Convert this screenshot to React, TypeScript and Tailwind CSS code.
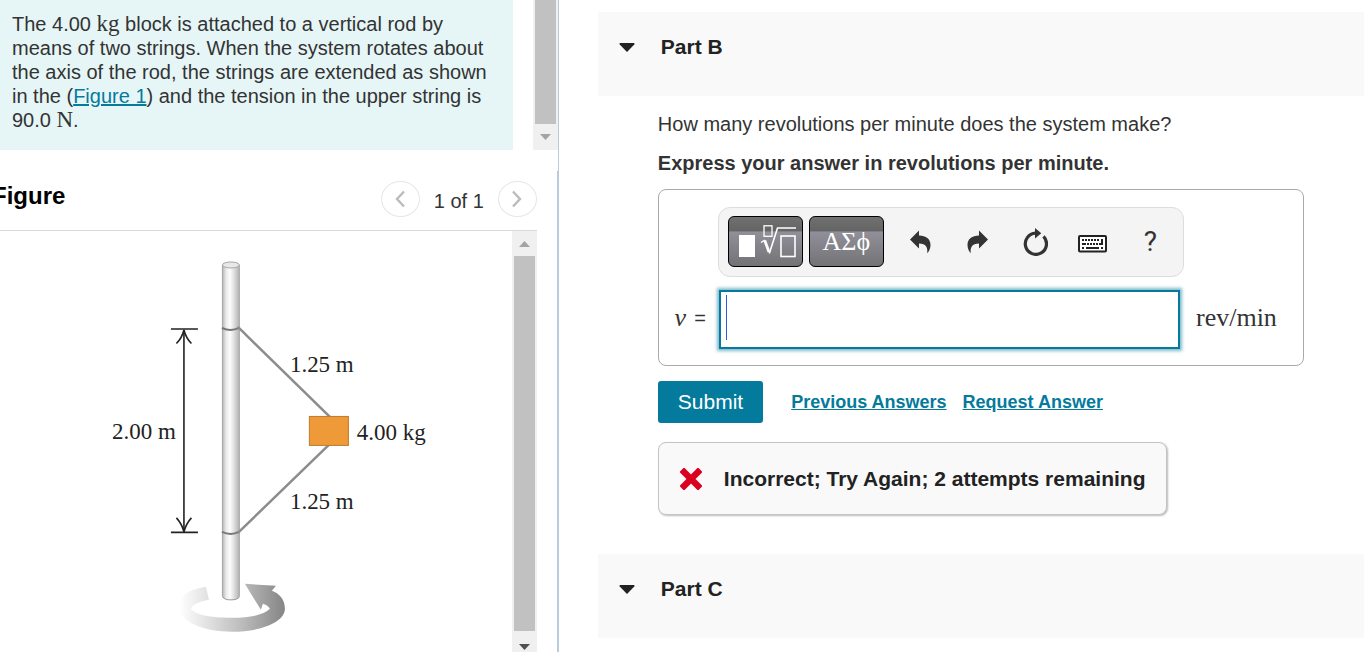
import React from "react"

function ScrollArrow({ up, dark }: { up?: boolean; dark?: boolean }) {
  return (
    <svg width="11" height="6" viewBox="0 0 11 6" className={dark ? "text-[#505050]" : "text-[#a3a3a3]"} aria-hidden="true">
      <path d={up ? "M0 6 L5.5 0 L11 6 Z" : "M0 0 L5.5 6 L11 0 Z"} fill="currentColor" />
    </svg>
  )
}

function UndoIcon({ flip }: { flip?: boolean }) {
  return (
    <svg width="21" height="24" viewBox="0 0 21 24" aria-hidden="true">
      <path
        transform={flip ? "matrix(-1 0 0 1 21 0)" : undefined}
        d="M0 9.5 L9 0.5 V5.5 C16 5.5 20.5 9 20.5 15 C20.5 18.5 19 21.5 17.2 23.3 C18 17.5 16 13.5 9 13.5 V18.5 Z"
        fill="#333"
      />
    </svg>
  )
}

function ResetIcon() {
  return (
    <svg width="25" height="28" viewBox="0 0 25 28" aria-hidden="true">
      <path d="M20.5 8.4 A10.6 10.6 0 1 1 12.5 5.2" fill="none" stroke="#333" strokeWidth="3.2" />
      <path d="M12 0 L18.300 5.200 L12 10.500 Z" fill="#333" />
    </svg>
  )
}

function KeyboardIcon() {
  const top = [5, 8, 11, 14, 17, 20]
  const mid = [9, 12, 15, 18]
  return (
    <svg width="29" height="18" viewBox="0 0 29 18" fill="#222" aria-hidden="true">
      <rect x="1" y="1" width="27" height="15.5" rx="1" fill="#fff" stroke="#222" strokeWidth="2" />
      {top.map((x) => (
        <rect key={x} x={x - 1} y="4" width="2" height="2" />
      ))}
      {mid.map((x) => (
        <rect key={x} x={x} y="8" width="2" height="2" />
      ))}
      <path d="M23 4 h2 v6 h-4 v-2 h2 Z" />
      <rect x="4" y="8" width="4" height="2" />
      <rect x="4" y="12" width="2" height="2" />
      <rect x="8" y="12" width="13" height="2" />
      <rect x="23" y="12" width="2" height="2" />
    </svg>
  )
}

function TemplateIcon() {
  return (
    <svg width="61" height="34" viewBox="-4 0 61 34" fill="none" stroke="#fff" aria-hidden="true">
      <rect x="0" y="10" width="16" height="22" fill="#fff" stroke="none" />
      <rect x="25" y="0.8" width="8" height="10.5" strokeWidth="1.3" />
      <path d="M22 17.5 L26 15" strokeWidth="1.3" />
      <path d="M25.800 15.500 L30 27" strokeWidth="2.8" />
      <path d="M30.300 28.500 L38.500 3 H57" strokeWidth="1.6" />
      <rect x="42" y="11" width="14" height="20.500" strokeWidth="1.6" />
    </svg>
  )
}

function RodFigure() {
  return (
    <svg viewBox="0 0 512 421" className="w-full max-w-[512px]" role="img" aria-label="Block held to a vertical rod by two strings">
      <defs>
        <linearGradient id="rod" x1="0" x2="1" y1="0" y2="0">
          <stop offset="0" stopColor="#9c9c9c" />
          <stop offset="0.1" stopColor="#c9c9c9" />
          <stop offset="0.25" stopColor="#ececec" />
          <stop offset="0.45" stopColor="#fdfdfd" />
          <stop offset="0.65" stopColor="#e2e2e2" />
          <stop offset="0.9" stopColor="#bcbcbc" />
          <stop offset="1" stopColor="#a2a2a2" />
        </linearGradient>
        <linearGradient id="spin" x1="0" x2="1" y1="0" y2="0">
          <stop offset="0" stopColor="#fff" />
          <stop offset="0.3" stopColor="#dedede" />
          <stop offset="0.6" stopColor="#bbb" />
          <stop offset="1" stopColor="#858585" />
        </linearGradient>
      </defs>

      <path
        d="M206 356 C188 359 179 365 179 376 C179 391 204 401 232 401 C262 401 285 391 285 378 C285 369 280 363 272 360 L276 355 L245 353 L261 379 L263 373 C267 374 269 376 270 378 C264 384 250 387 232 387 C210 387 195 384 191 378 C193 373 199 371 209 369 Z"
        fill="url(#spin)"
      />

      <path d="M222 34 V365 Q222 369 231 369 Q240 369 240 365 V34 Z" fill="url(#rod)" />
      <path d="M223 366 Q224 369 231 369 Q238 369 239 366" fill="none" stroke="#999" />
      <ellipse cx="231" cy="34" rx="8.500" ry="3" fill="#e8e8e8" stroke="#a5a5a5" />
      <path d="M222 97 Q231 101 239 97" fill="none" stroke="#777" strokeWidth="2" />
      <path d="M222 301 Q231 305 239 301" fill="none" stroke="#777" strokeWidth="2" />

      <g stroke="#8c8c8c" strokeWidth="2.5">
        <path d="M238 96 L330 186" />
        <path d="M238 302 L330 213" />
      </g>
      <rect x="309.5" y="185.5" width="39" height="29" fill="#ee9a38" stroke="#bd7a2c" />

      <g fill="none" stroke="#222" strokeWidth="1.6">
        <path d="M171 98 H198 M171 301.500 H198 M184 99 V301" />
        <path d="M176.500 112.500 Q182 107 184 99 Q186 107 191.500 112.500" />
        <path d="M176.500 287 Q182 293 184 301 Q186 293 191.500 287" />
      </g>

      <g fontSize="23" fill="#222" className="font-['Liberation_Serif',serif]">
        <text x="112" y="208">2.00 m</text>
        <text x="290" y="141">1.25 m</text>
        <text x="357" y="209">4.00 kg</text>
        <text x="290" y="278">1.25 m</text>
      </g>
    </svg>
  )
}

function PartHeader({ title }: { title: string }) {
  return (
    <h2 className="flex h-[84px] bg-[#f9f9f9] pl-[21px] pt-[23px] text-[21px] leading-6 font-bold text-[#222]">
      <button type="button" className="flex h-6 items-center gap-[26px]">
        <svg width="16" height="9" viewBox="0 0 16 9" aria-hidden="true">
          <path d="M1 0 H15 Q16 0.500 15.300 1.500 L8 9 L0.700 1.500 Q0 0.500 1 0 Z" fill="#222" />
        </svg>
        {title}
      </button>
    </h2>
  )
}

function PagerButton({ label, d }: { label: string; d: string }) {
  return (
    <button
      type="button"
      aria-label={label}
      className="flex h-9 w-[39px] items-center justify-center rounded-[50%] border border-[#e6e6e6]"
    >
      <svg width="12" height="18" viewBox="0 0 12 18" fill="none" stroke="#bbb" strokeWidth="2.4" aria-hidden="true">
        <path d={d} />
      </svg>
    </button>
  )
}

const paletteButton =
  "flex h-[51px] w-[75px] items-center justify-center rounded-md border border-black bg-[linear-gradient(#707070_0%,#646464_29%,#918f99_30%,#737376_100%)] text-white"

export default function App() {
  return (
    <div className="grid h-screen grid-cols-[9fr_13fr] overflow-hidden bg-white font-['Liberation_Sans',Arial,sans-serif] text-xl leading-6 text-[#333]">
      <aside className="flex min-h-0 flex-col overflow-hidden">
        <section className="flex border-r border-[#b9cbdc]">
          <p className="mr-5 flex-1 bg-[#e6f6f7] pt-3 pr-6 pb-[18px] pl-3">
            The 4.00 <span className="font-['Liberation_Serif',serif] text-[23px] leading-5">kg</span> block is attached to a vertical rod by means of two
            strings. When the system rotates about the axis of the rod, the strings are extended as shown in the (
            <a href="#figure" className="text-[#047a9c] underline">
              Figure 1
            </a>
            ) and the tension in the upper string is 90.0 <span className="font-['Liberation_Serif',serif] text-[23px] leading-5">N</span>.
          </p>
          <div className="flex w-[25px] flex-col items-center bg-[#f0f0f0]">
            <div className="w-[21px] flex-1 bg-[#c1c1c1]" />
            <div className="flex h-[26px] items-center">
              <ScrollArrow />
            </div>
          </div>
        </section>
        <div className="h-[21px] border-r border-[#b9cbdc]" />

        <section id="figure" className="flex min-h-0 flex-1 flex-col border-r-2 border-[#b9cbdc] pr-5">
          <div className="flex h-[60px] shrink-0 items-start justify-between border-b border-[#d9d9d9] pt-[10px]">
            <h2 className="-ml-2 pt-[3px] text-2xl leading-6 font-bold text-black">Figure</h2>
            <div className="flex items-center gap-[14px]">
              <PagerButton label="Previous figure" d="M10 1.500 L3 9 L10 16.500" />
              <span className="pt-1">1 of 1</span>
              <PagerButton label="Next figure" d="M2 1.500 L9 9 L2 16.500" />
            </div>
          </div>
          <div className="flex min-h-0 flex-1">
            <div className="min-w-0 flex-1 overflow-hidden">
              <RodFigure />
            </div>
            <div className="flex w-[25px] flex-col items-center bg-[#f0f0f0]">
              <div className="flex h-[25px] items-center">
                <ScrollArrow up />
              </div>
              <div className="w-[21px] flex-1 bg-[#c1c1c1]" />
              <div className="flex h-[21px] items-end pb-[2px]">
                <ScrollArrow dark />
              </div>
            </div>
          </div>
        </section>
      </aside>

      <main className="min-w-0 overflow-hidden pt-3 pr-[2px] pl-[39px]">
        <PartHeader title="Part B" />
        <div className="pt-4 pr-[60px] pb-[39px] pl-[60px]">
          <p>How many revolutions per minute does the system make?</p>
          <p className="mt-[15px] font-bold">Express your answer in revolutions per minute.</p>

          <div className="mt-[14px] grid grid-cols-[59px_1fr_119px] gap-y-[13px] rounded-lg border border-[#aaa] pt-[17px] pb-4">
            <div className="col-start-2 flex h-[70px] rounded-xl border border-[#ddd] bg-[#f4f4f4] pt-2 pr-1 pl-[9px]">
              <div className="flex gap-[6px]">
                <button type="button" aria-label="Templates" className={paletteButton}>
                  <TemplateIcon />
                </button>
                <button type="button" aria-label="Symbols" className={paletteButton}>
                  <span className="font-['Liberation_Serif',serif] text-[26px] leading-[51px]">ΑΣϕ</span>
                </button>
              </div>
              <div className="ml-2 grid h-[51px] flex-1 grid-cols-5 place-items-center">
                <button type="button" aria-label="Undo">
                  <UndoIcon />
                </button>
                <button type="button" aria-label="Redo">
                  <UndoIcon flip />
                </button>
                <button type="button" aria-label="Reset">
                  <ResetIcon />
                </button>
                <button type="button" aria-label="Keyboard shortcuts" className="pt-1">
                  <KeyboardIcon />
                </button>
                <button type="button" aria-label="Help" className="font-[Roboto,sans-serif] text-[28px] leading-7">
                  ?
                </button>
              </div>
            </div>

            <label htmlFor="answer" className="col-start-1 flex items-center justify-end gap-2 pr-3 pb-1">
              <span className="font-['Liberation_Serif',serif] text-[26px] italic">ν</span>
              <span>=</span>
            </label>
            <div className="relative mr-1 ml-px">
              <input
                id="answer"
                type="text"
                className="block h-[59px] w-full border-2 border-[#047a9c] bg-white px-2 shadow-[0_0_3px_2px_#047a9c80] outline-none"
              />
              <span className="absolute top-[5px] left-[7px] h-[45px] w-px bg-[#2a5bd7]" />
            </div>
            <span className="flex items-center pb-1 pl-3 font-['Liberation_Serif',serif] text-[26px]">rev/min</span>
          </div>

          <div className="mt-[15px] flex items-center">
            <button type="button" className="h-[42px] rounded-[3px] bg-[#047a9c] px-5 text-[21px] text-white">
              Submit
            </button>
            <a href="#previous" className="ml-7 text-lg font-bold text-[#047a9c] underline">
              Previous Answers
            </a>
            <a href="#request" className="ml-4 text-lg font-bold text-[#047a9c] underline">
              Request Answer
            </a>
          </div>

          <div
            role="status"
            className="mt-[19px] flex h-[73px] w-fit items-center gap-[22px] rounded-lg border border-[#c4c4c4] bg-[#f9f9f9] px-[21px] text-[21px] font-bold text-[#222] shadow-[1px_1px_2px_#0004]"
          >
            <svg width="22" height="22" viewBox="0 0 22 22" aria-hidden="true">
              <path d="M4 4 L18 18 M18 4 L4 18" stroke="#db0020" strokeWidth="6.500" strokeLinecap="square" />
            </svg>
            Incorrect; Try Again; 2 attempts remaining
          </div>
        </div>
        <PartHeader title="Part C" />
      </main>
    </div>
  )
}
